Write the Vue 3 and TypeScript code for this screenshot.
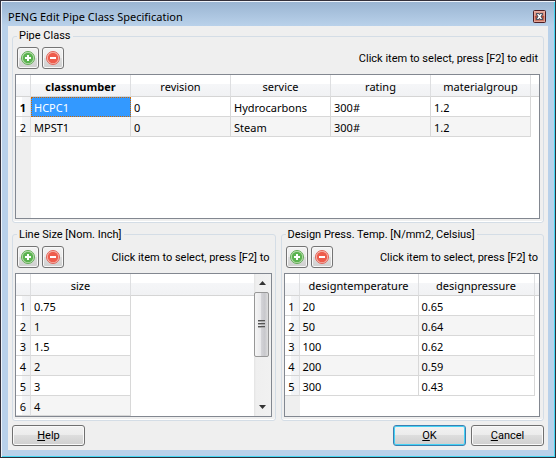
<script setup lang="ts">
import { ref } from 'vue'

interface Column {
  name: string
  width: number
}

interface Panel {
  id: string
  title: string
  hint: string
  rowHeader: number
  columns: Column[]
  rows: string[][]
  scrollable: boolean
}

const panels: Panel[] = [
  {
    id: 'pipe',
    title: 'Pipe Class',
    hint: 'Click item to select, press [F2] to edit',
    rowHeader: 15,
    columns: ['classnumber', 'revision', 'service', 'rating', 'materialgroup'].map((name) => ({ name, width: 100 })),
    rows: [
      ['HCPC1', '0', 'Hydrocarbons', '300#', '1.2'],
      ['MPST1', '0', 'Steam', '300#', '1.2'],
    ],
    scrollable: false,
  },
  {
    id: 'size',
    title: 'Line Size [Nom. Inch]',
    hint: 'Click item to select, press [F2] to',
    rowHeader: 15,
    columns: [{ name: 'size', width: 100 }],
    rows: [['0.75'], ['1'], ['1.5'], ['2'], ['3'], ['4']],
    scrollable: true,
  },
  {
    id: 'design',
    title: 'Design Press. Temp. [N/mm2, Celsius]',
    hint: 'Click item to select, press [F2] to',
    rowHeader: 15,
    columns: [
      { name: 'designtemperature', width: 119 },
      { name: 'designpressure', width: 116 },
    ],
    rows: [
      ['20', '0.65'],
      ['50', '0.64'],
      ['100', '0.62'],
      ['200', '0.59'],
      ['300', '0.43'],
    ],
    scrollable: false,
  },
]

const selected = ref({ panel: 'pipe', row: 0, col: 0 })

function isSelected(panel: string, row: number, col: number): boolean {
  const s = selected.value
  return s.panel === panel && s.row === row && s.col === col
}
function isCurrentRow(panel: string, row: number): boolean {
  return selected.value.panel === panel && selected.value.row === row
}
function isCurrentCol(panel: string, col: number): boolean {
  return selected.value.panel === panel && selected.value.col === col
}
</script>

<template>
  <main class="window">
    <header class="titlebar">
      <h1>PENG Edit Pipe Class Specification</h1>
      <button class="close" type="button" aria-label="Close">
        <svg width="13" height="13" viewBox="0 0 13 13">
          <defs>
            <linearGradient id="closeFill" x1="0" y1="0" x2="0" y2="1">
              <stop offset="0" stop-color="#e9aa9b" />
              <stop offset="0.45" stop-color="#d08373" />
              <stop offset="0.5" stop-color="#b44a36" />
              <stop offset="1" stop-color="#d98b78" />
            </linearGradient>
          </defs>
          <rect x="0.5" y="0.5" width="12" height="12" rx="1" fill="url(#closeFill)" stroke="#4b1c22" />
          <rect x="1.5" y="1.5" width="10" height="10" fill="none" stroke="#e8b4a8" stroke-opacity="0.7" />
          <path d="M3 3h3l.5 1 .5-1h3v2L8.500 6.500 10 8v2H7l-.5-1-.5 1H3V8l1.500-1.500L3 5z" fill="#4d5361" />
          <path d="M4 4h1.500l1 1.300L7.500 4H9L7.500 6.500 9 9H7.500l-1-1.300L5.500 9H4l1.500-2.500z" fill="#fff" />
        </svg>
      </button>
    </header>

    <form class="client" @submit.prevent>
      <div class="groups">
        <fieldset v-for="p in panels" :key="p.id" class="group" :class="p.id">
          <legend>{{ p.title }}</legend>
          <div class="toolbar">
            <button class="tool" type="button" aria-label="Add row">
              <svg width="16" height="16" viewBox="0 0 16 16">
                <circle cx="8" cy="8" r="6.500" fill="#c3e2b8" stroke="#62ad56" />
                <circle cx="8" cy="8" r="5.200" fill="#5bb350" />
                <path d="M8 5v6M5 8h6" stroke="#fff" stroke-width="2" />
              </svg>
            </button>
            <button class="tool" type="button" aria-label="Remove row">
              <svg width="16" height="16" viewBox="0 0 16 16">
                <circle cx="8" cy="8" r="6.500" fill="#f8beb3" stroke="#e0645a" />
                <circle cx="8" cy="8" r="5.200" fill="#ee5c4c" />
                <path d="M5 8h6" stroke="#fff" stroke-width="2" />
              </svg>
            </button>
            <span class="hint">{{ p.hint }}</span>
          </div>

          <div class="view">
            <div class="viewport">
              <table>
                <colgroup>
                  <col :style="{ width: p.rowHeader + 'px' }" />
                  <col v-for="c in p.columns" :key="c.name" :style="{ width: c.width + 'px' }" />
                  <col />
                </colgroup>
                <thead>
                  <tr>
                    <td class="head"></td>
                    <th
                      v-for="(c, ci) in p.columns"
                      :key="c.name"
                      scope="col"
                      class="head"
                      :class="{ current: isCurrentCol(p.id, ci) }"
                    >{{ c.name }}</th>
                    <td class="head last"></td>
                  </tr>
                </thead>
                <tbody>
                  <tr v-for="(r, ri) in p.rows" :key="ri">
                    <th scope="row" class="num" :class="{ current: isCurrentRow(p.id, ri) }">{{ ri + 1 }}</th>
                    <td
                      v-for="(v, ci) in r"
                      :key="ci"
                      class="cell"
                      :class="{ selected: isSelected(p.id, ri, ci) }"
                      @click="selected = { panel: p.id, row: ri, col: ci }"
                    >{{ v }}</td>
                    <td class="filler"></td>
                  </tr>
                </tbody>
              </table>
              <div class="gutter"></div>
            </div>
            <div v-if="p.scrollable" class="scrollbar" aria-hidden="true">
              <svg class="arrow" width="7" height="4" viewBox="0 0 7 4"><path d="M3.500 0L7 4H0z" fill="#333" /></svg>
              <div class="track">
                <div class="thumb"><i></i><i></i><i></i></div>
              </div>
              <svg class="arrow" width="7" height="4" viewBox="0 0 7 4"><path d="M0 0h7L3.500 4z" fill="#333" /></svg>
            </div>
          </div>
        </fieldset>
      </div>

      <footer class="actions">
        <button class="push" type="button"><u>H</u>elp</button>
        <span class="spacer"></span>
        <button class="push default" type="submit"><u>O</u>K</button>
        <button class="push" type="button"><u>C</u>ancel</button>
      </footer>
    </form>
  </main>
</template>

<style>
body {
  margin: 0;
  background: #b9d1ea;
}
</style>

<style scoped>
* {
  box-sizing: border-box;
}

.window {
  display: flex;
  flex-direction: column;
  height: 100vh;
  min-height: 400px;
  padding: 1px 7px 7px 6px;
  border: 1px solid #33303a;
  border-bottom-color: #2c2e38;
  background: linear-gradient(#99b4d1, #b9d1ea 25px);
  box-shadow: inset 1px 1px #eef3fa, inset -1px -1px #45d6f2;
  color: #000;
  font: 11px/16px "Noto Sans", "Open Sans", sans-serif;
}

.titlebar {
  display: flex;
  flex: none;
  align-items: center;
  height: 24px;
}

h1 {
  flex: 1;
  margin: 0;
  padding-top: 6px;
  padding-left: 1px;
  font-size: 11px;
  font-weight: 400;
}

.close {
  display: flex;
  margin-top: 4px;
  margin-right: 2px;
  padding: 0;
  border: 0;
  background: none;
}

.client {
  display: flex;
  flex: 1;
  flex-direction: column;
  min-height: 0;
  margin-left: 1px;
  padding: 2px 4px 4px;
  background: #efefef;
}

.groups {
  display: grid;
  flex: 1;
  grid-template-rows: 1fr 1fr;
  grid-template-columns: 1fr 1fr;
  gap: 4px 5px;
  min-height: 0;
}

.group {
  display: flex;
  flex-direction: column;
  min-width: 0;
  min-height: 0;
  margin: 0;
  padding: 3px 3px 3px 2px;
  border: 1px solid #d4dde6;
  border-radius: 3px;
  box-shadow: inset 0 -1px #fff;
}

.pipe {
  grid-column: 1 / -1;
}

.group legend {
  height: 16px;
  margin-left: 2px;
  padding: 0 2px;
  font-family: Roboto, "Open Sans", sans-serif;
}

.toolbar {
  display: flex;
  flex: none;
  align-items: center;
  gap: 3px;
  padding-left: 2px;
}

.tool {
  display: flex;
  align-items: center;
  justify-content: center;
  width: 22px;
  height: 22px;
  padding: 0;
  border: 1px solid #747474;
  border-radius: 3px;
  background: linear-gradient(#f3f3f3, #ebebeb 50%, #dddddd 50%, #cfcfcf);
  box-shadow: inset 0 0 0 1px #f8f8f8;
}

.hint {
  flex: 1;
  overflow: hidden;
  padding-top: 2px;
  padding-right: 2px;
  font-family: Roboto, "Open Sans", sans-serif;
  text-align: right;
  white-space: nowrap;
}

.view {
  display: flex;
  flex: 1;
  min-height: 0;
  margin-top: 5px;
  border: 1px solid #828790;
  background: #fff;
}

.viewport {
  display: flex;
  flex: 1;
  flex-direction: column;
  min-width: 0;
  overflow: hidden;
}

.gutter {
  flex: 1;
  width: 15px;
  background: #efefef;
}

table {
  flex: none;
  width: 100%;
  border-spacing: 0;
  table-layout: fixed;
}

th,
td {
  overflow: hidden;
  padding: 0;
  font-weight: 400;
  white-space: nowrap;
}

.head {
  height: 22px;
  padding-top: 3px;
  border-right: 1px solid #dedfe1;
  border-bottom: 1px solid #d5d5d5;
  background: linear-gradient(#fff 45%, #f5f6f8 45%, #f1f2f4);
  line-height: 18px;
}

.head.last {
  border-right: 0;
}

.num {
  height: 20px;
  padding-top: 2px;
  border-right: 1px solid #dedfe1;
  border-bottom: 1px solid #d5d5d5;
  background: linear-gradient(90deg, #fff 45%, #f4f5f7 45%, #f1f2f4);
  line-height: 17px;
}

.cell {
  height: 20px;
  padding-top: 2px;
  padding-left: 3px;
  border-right: 1px solid #d8d8d8;
  border-bottom: 1px solid #d8d8d8;
  line-height: 17px;
}

tbody tr:nth-child(even) .cell {
  background: #f5f5f5;
}

.head.current,
.num.current {
  font-family: "Open Sans", "Noto Sans", sans-serif;
  font-weight: 700;
}

.cell.selected {
  padding-top: 1px;
  padding-left: 2px;
  border: 1px dotted #cc6600;
  background: #3399ff;
  color: #fff;
}

.scrollbar {
  display: flex;
  flex: none;
  flex-direction: column;
  align-items: center;
  width: 17px;
  padding: 7px 0;
  background: linear-gradient(90deg, #e3e3e3, #efefef 2px, #f1f1f1);
}

.track {
  flex: 1;
  align-self: stretch;
  padding: 7px 2px 7px 0;
}

.thumb {
  display: flex;
  flex-direction: column;
  align-items: center;
  justify-content: center;
  gap: 1px;
  height: 65px;
  border: 1px solid #979797;
  border-radius: 2px;
  background: linear-gradient(90deg, #f5f5f5, #e9e9eb 45%, #d3d3d7 50%, #c8c8cc 75%, #dedede);
}

.thumb i {
  width: 7px;
  height: 2px;
  background: linear-gradient(#555 50%, #aaa 50%);
}

.actions {
  display: flex;
  flex: none;
  gap: 5px;
  margin-top: 4px;
}

.spacer {
  flex: 1;
}

.push {
  width: 73px;
  height: 21px;
  padding: 0;
  border: 1px solid #707070;
  border-radius: 3px;
  background: linear-gradient(#f2f2f2, #ebebeb 50%, #dddddd 50%, #cfcfcf);
  box-shadow: inset 0 0 0 1px #f9f9f9;
  color: #000;
  font: 11px/17px Roboto, "Open Sans", sans-serif;
}

.push.default {
  border-color: #3c7fb1;
  box-shadow: inset 0 0 0 1px #45d2f5;
}
</style>
